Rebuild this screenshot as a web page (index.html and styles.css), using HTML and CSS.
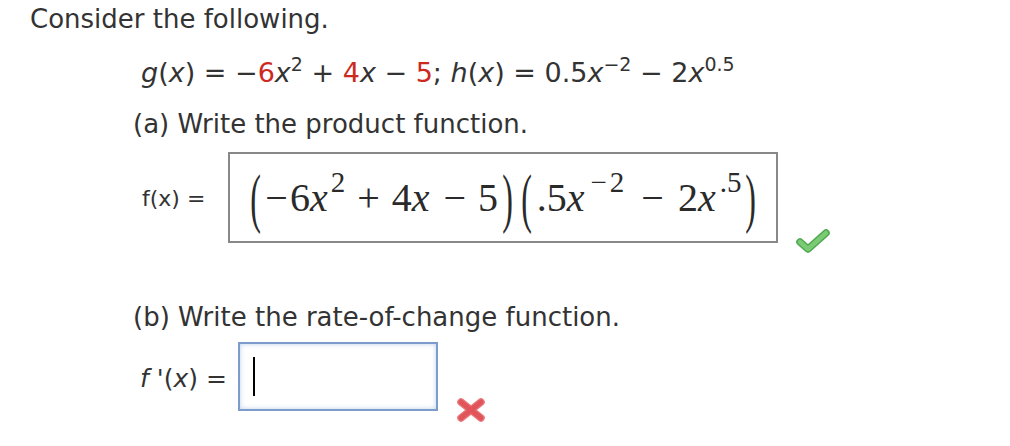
FILE: index.html
```html
<!DOCTYPE html>
<html>
<head>
<meta charset="utf-8">
<link rel="stylesheet" href="styles.css">
</head>
<body>
<div class="page">
  <p class="intro">Consider the following.</p>
  <div class="given">
    <i>g</i>(<i>x</i>) = −<span class="red">6</span><i>x</i><sup>2</sup> + <span class="red">4</span><i>x</i> − <span class="red">5</span>; <i>h</i>(<i>x</i>) = 0.5<i>x</i><sup>−2</sup> − 2<i>x</i><sup>0.5</sup>
  </div>

  <p class="question q-a">(a) Write the product function.</p>
  <div class="answer-row row-a">
    <span class="label">f(x) =</span>
    <div class="mathbox">
      <span class="paren">(</span><span class="m"><span class="neg">−</span>6<i>x</i><sup>2</sup><span class="op">+</span>4<i>x</i><span class="op minus">−</span>5</span><span class="paren">)</span><span class="paren">(</span><span class="m g2">.5<i>x</i><sup class="wide">−2</sup><span class="op minus">−</span>2<i>x</i><sup>.5</sup></span><span class="paren">)</span>
    </div>
    <svg class="check" width="36" height="26" viewBox="0 0 36 26">
      <path d="M5 14 L13 21 L31 5" fill="none" stroke="#4fa84f" stroke-width="7.5" stroke-linecap="round" stroke-linejoin="round"/>
      <path d="M5 14 L13 21 L31 5" fill="none" stroke="#7acb73" stroke-width="4.5" stroke-linecap="round" stroke-linejoin="round"/>
    </svg>
  </div>

  <p class="question q-b">(b) Write the rate-of-change function.</p>
  <div class="answer-row row-b">
    <span class="label label-b"><i>f</i> '(<i>x</i>) =</span>
    <div class="inputbox"><span class="cursor"></span></div>
    <svg class="cross" width="34" height="26" viewBox="0 0 34 26">
      <path d="M7 5 L27 21 M27 5 L7 21" fill="none" stroke="#e8787b" stroke-width="7.5" stroke-linecap="round"/>
      <path d="M7 5 L27 21 M27 5 L7 21" fill="none" stroke="#e0545a" stroke-width="5" stroke-linecap="round"/>
    </svg>
  </div>
</div>
</body>
</html>
```
FILE: styles.css
```css
html, body {
  margin: 0;
  padding: 0;
  background: #fff;
}
.page {
  font-family: "DejaVu Sans", Verdana, sans-serif;
  color: #333;
  padding: 3px 0 30px 30px;
}
.intro {
  margin: 0;
  font-size: 26px;
  line-height: 32px;
}
.given {
  margin: 22px 0 0 111px;
  font-size: 27px;
  line-height: 32px;
}
.given sup {
  font-size: 19px;
  line-height: 0;
  vertical-align: 11px;
}
.red { color: #cc2a1f; }
.question {
  margin: 0;
  font-size: 26px;
  line-height: 32px;
}
.q-a { margin: 19px 0 0 103px; }
.q-b { margin: 47px 0 0 103px; }
.answer-row {
  display: flex;
  align-items: flex-start;
}
.row-a { margin: 12px 0 0 112px; }
.row-b { margin: 9px 0 0 110px; }
.label {
  font-size: 22px;
  line-height: 28px;
  width: 86px;
  margin-top: 33px;
}
.label-b {
  font-size: 25px;
  line-height: 30px;
  width: 98px;
  margin-top: 22px;
}
.mathbox {
  border: 2px solid #888;
  width: 550px;
  height: 91px;
  box-sizing: border-box;
  display: flex;
  align-items: center;
  padding-left: 16px;
  font-family: "Liberation Serif", "Times New Roman", serif;
  font-size: 40px;
  color: #2a2a2a;
  white-space: nowrap;
}
.mathbox > span { flex-shrink: 0; }
.mathbox i { margin-right: 2px; }
.mathbox sup {
  font-size: 29px;
  line-height: 0;
  vertical-align: 19px;
  margin-left: 1px;
}
.mathbox sup.wide {
  letter-spacing: 3px;
  margin-left: 3px;
}
.neg { margin-right: 2px; }
.op { margin: 0 12px; }
.g2 .op { margin: 0 14px; }
.g2 i { margin-right: 3px; }
.paren {
  display: inline-block;
  font-size: 40px;
  transform: scale(0.8, 1.65);
  margin: 0 3px;
}
.check {
  margin: 76px 0 0 17px;
}
.inputbox {
  width: 200px;
  height: 69px;
  box-sizing: border-box;
  border: 2px solid #7e9ccb;
  box-shadow: inset 0 0 5px rgba(110, 150, 210, 0.45);
  display: flex;
  align-items: center;
  padding-left: 13px;
}
.cursor {
  width: 2px;
  height: 39px;
  background: #000;
}
.cross {
  margin: 55px 0 0 16px;
}
```
